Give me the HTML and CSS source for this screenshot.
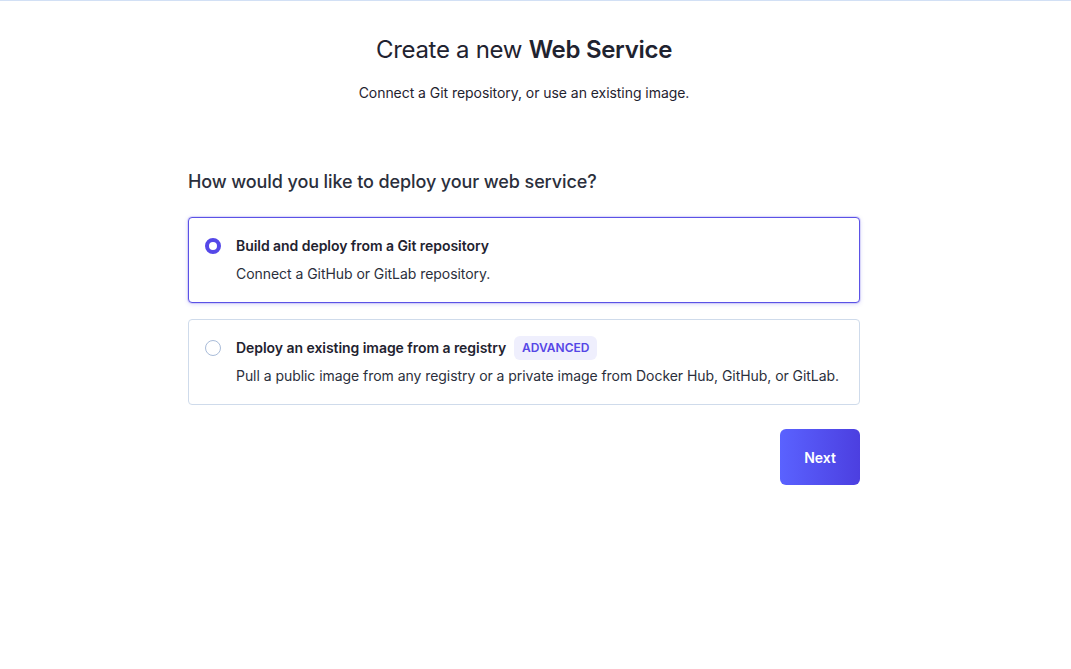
FILE: index.html
```html
<!DOCTYPE html>
<html lang="en">
<head>
<meta charset="utf-8">
<title>Create a new Web Service</title>
<link rel="stylesheet" href="styles.css">
</head>
<body>
<div class="topline"></div>
<main class="page">
  <header class="intro">
    <h1 class="title">Create a new <strong>Web Service</strong></h1>
    <p class="subtitle">Connect a Git repository, or use an existing image.</p>
  </header>
  <section class="form">
    <h2 class="question">How would you like to deploy your web service?</h2>
    <div class="options">
      <label class="option selected">
        <span class="radio checked"></span>
        <span class="option-body">
          <span class="option-title">Build and deploy from a Git repository</span>
          <span class="option-desc">Connect a GitHub or GitLab repository.</span>
        </span>
      </label>
      <label class="option">
        <span class="radio"></span>
        <span class="option-body">
          <span class="option-title">Deploy an existing image from a registry <span class="badge">ADVANCED</span></span>
          <span class="option-desc">Pull a public image from any registry or a private image from Docker Hub, GitHub, or GitLab.</span>
        </span>
      </label>
    </div>
    <div class="actions">
      <button class="next" type="button">Next</button>
    </div>
  </section>
</main>
</body>
</html>
```

FILE: styles.css
```css
* { box-sizing: border-box; }
html, body { margin: 0; padding: 0; background: #ffffff; }
body {
  font-family: Inter, "Noto Sans", "Liberation Sans", sans-serif;
  color: #1f2330;
  letter-spacing: -0.05px;
  -webkit-font-smoothing: antialiased;
}
.topline { height: 1px; background: #d2e0f5; }
.page {
  width: 1048px;
  display: flex;
  flex-direction: column;
  align-items: center;
}
.intro { text-align: center; padding-top: 33px; }
.title {
  margin: 0;
  font-size: 24px;
  line-height: 32px;
  font-weight: 400;
  letter-spacing: -0.3px;
  color: #1f2330;
}
.title strong { font-weight: 600; }
.subtitle {
  margin: 17px 0 0;
  font-size: 14px;
  line-height: 20px;
  color: #1f2330;
}
.form { width: 672px; margin-top: 65px; }
.question {
  margin: 0;
  font-size: 18px;
  line-height: 28px;
  font-weight: 500;
  letter-spacing: -0.1px;
  color: #2b2f3c;
}
.options {
  margin-top: 21px;
  display: flex;
  flex-direction: column;
  gap: 16px;
}
.option {
  display: flex;
  align-items: flex-start;
  gap: 15px;
  padding: 16px 16px 18px;
  border: 1px solid #cfdbeb;
  border-radius: 4px;
  background: #fff;
}
.option.selected {
  border-color: #5b52e6;
  box-shadow: 0 0 0 1px rgba(91, 82, 230, 0.15), 0 1px 4px rgba(91, 82, 230, 0.25);
}
.radio {
  flex: none;
  width: 16px;
  height: 16px;
  margin-top: 4px;
  border-radius: 50%;
  border: 1px solid #a9bcd9;
  background: #fff;
}
.radio.checked { border: 4.5px solid #5548e8; }
.option-body { display: flex; flex-direction: column; gap: 6px; min-width: 0; }
.option-title {
  display: flex;
  align-items: center;
  gap: 8px;
  min-height: 24px;
  font-size: 14px;
  line-height: 20px;
  font-weight: 600;
  color: #1f2330;
}
.option-desc {
  font-size: 14px;
  line-height: 20px;
  color: #2b2f3c;
  white-space: nowrap;
}
.badge {
  display: inline-flex;
  align-items: center;
  height: 24px;
  padding: 0 8px;
  border-radius: 6px;
  background: #efeffd;
  color: #5546e6;
  font-size: 12px;
  font-weight: 600;
  letter-spacing: 0;
}
.actions { display: flex; justify-content: flex-end; margin-top: 24px; }
.next {
  width: 80px;
  height: 56px;
  border: 0;
  border-radius: 6px;
  background: linear-gradient(90deg, #5a62ff, #4c3fe0);
  color: #fff;
  font-family: inherit;
  font-size: 14px;
  font-weight: 600;
  letter-spacing: 0;
}
```
